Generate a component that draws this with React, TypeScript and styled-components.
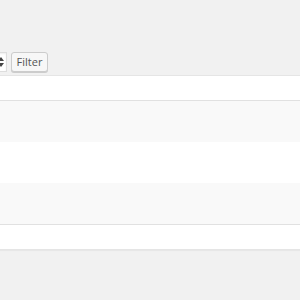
import React from 'react';
import styled, { createGlobalStyle } from 'styled-components';

const GlobalStyle = createGlobalStyle`
  html, body {
    margin: 0;
    padding: 0;
    background: #f1f1f1;
    font-family: 'Open Sans', 'Liberation Sans', sans-serif;
    overflow: hidden;
  }
`;

const Page = styled.div`
  width: 300px;
  height: 300px;
  overflow: hidden;
  padding-top: 52px;
  box-sizing: border-box;
`;

const Toolbar = styled.div`
  display: flex;
  align-items: center;
  gap: 4px;
  height: 20px;
  margin-left: -52px;
  margin-bottom: 3px;
`;

const Select = styled.div`
  width: 59px;
  height: 20px;
  box-sizing: border-box;
  background: #fff;
  border: 1px solid #ddd;
  box-shadow: inset 0 1px 2px rgba(0, 0, 0, 0.07);
  display: flex;
  align-items: center;
  justify-content: flex-end;
  padding-right: 2px;
`;

const FilterButton = styled.button`
  height: 20px;
  width: 37px;
  padding: 0;
  background: #f7f7f7;
  border: 1px solid #ccc;
  border-radius: 3px;
  box-shadow: 0 1px 0 #ccc;
  color: #555;
  font-family: 'Open Sans', 'Liberation Sans', sans-serif;
  font-size: 11px;
  line-height: 18px;
`;

const Table = styled.div`
  margin: 0 -2px;
  background: #fff;
  border: 1px solid #e5e5e5;
  box-shadow: 0 1px 1px rgba(0, 0, 0, 0.04);
`;

const HeadRow = styled.div<{ $foot?: boolean }>`
  height: 24px;
  ${({ $foot }) => ($foot ? 'border-top: 1px solid #e1e1e1;' : 'border-bottom: 1px solid #e1e1e1;')}
`;

const Row = styled.div<{ $striped?: boolean; $h: number }>`
  height: ${({ $h }) => $h}px;
  background: ${({ $striped }) => ($striped ? '#f9f9f9' : '#fff')};
`;

const rows = [41, 41, 41];

export default function App() {
  return (
    <>
      <GlobalStyle />
      <Page>
        <Toolbar>
          <Select>
            <svg width="6" height="10" viewBox="0 0 6 10">
              <path d="M3 0 L6 4 L0 4 Z M0 6 L6 6 L3 10 Z" fill="#444" />
            </svg>
          </Select>
          <FilterButton>Filter</FilterButton>
        </Toolbar>
        <Table>
          <HeadRow />
          {rows.map((h, i) => (
            <Row key={i} $h={h} $striped={i % 2 === 0} />
          ))}
          <HeadRow $foot />
        </Table>
      </Page>
    </>
  );
}
